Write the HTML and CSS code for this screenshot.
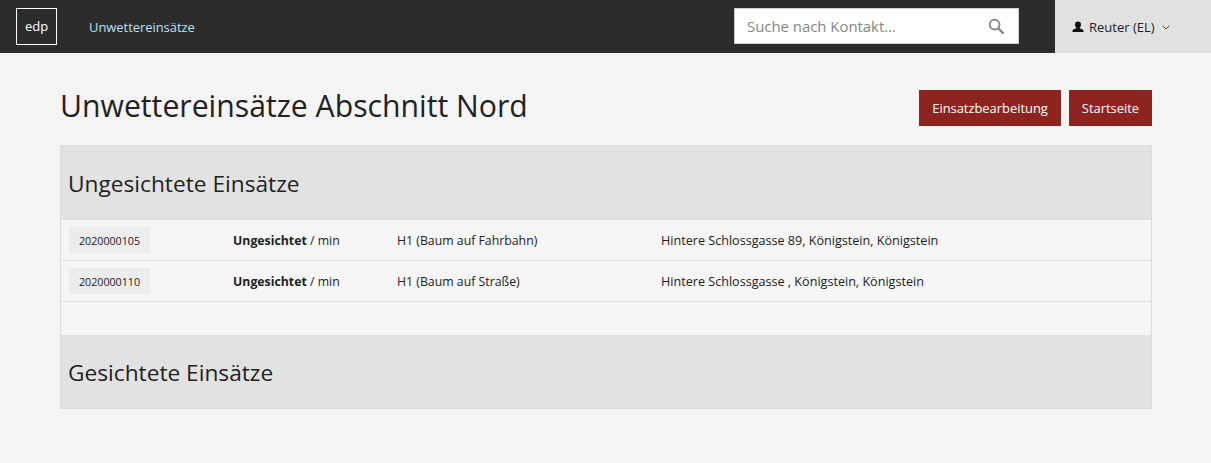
FILE: index.html
```html
<!DOCTYPE html>
<html lang="de">
<head>
  <meta charset="UTF-8" />
  <title>Unwettereinsätze</title>
  <link rel="stylesheet" href="styles.css">
</head>
<body>

<header class="topbar">
  <div class="logo">edp</div>
  <a class="nav-link" href="#">Unwettereinsätze</a>
  <div class="search-box">
    <span class="search-text">Suche nach Kontakt...</span>
    <svg class="search-icon" viewBox="0 0 18 18" width="17" height="17">
      <circle cx="7" cy="7" r="5.2" fill="none" stroke="#8a8a8a" stroke-width="2"/>
      <path d="M11 11l5.5 5.5" fill="none" stroke="#8a8a8a" stroke-width="2.6"/>
    </svg>
  </div>
  <div class="user-menu">
    <svg viewBox="0 0 12 12" width="12" height="12">
      <path d="M4.2 7.2V6.4C3.4 5.7 3 4.6 3 3.4 3 1.4 4.2.5 6 .5s3 .9 3 2.9c0 1.2-.4 2.3-1.2 3v.8c1.6.6 3.7 1.200 3.700 2.600V11H.5V9.800C.5 8.400 2.600 7.800 4.200 7.200z" fill="#111"/>
    </svg>
    <span class="user-name">Reuter (EL)</span>
    <svg viewBox="0 0 8 5" width="8" height="5">
      <path d="M.7.8L4 4l3.300-3.200" fill="none" stroke="#444" stroke-width="1"/>
    </svg>
  </div>
</header>

<main class="content">
  <div class="page-head">
    <h1>Unwettereinsätze Abschnitt Nord</h1>
    <div class="actions">
      <a class="btn" href="#">Einsatzbearbeitung</a>
      <a class="btn" href="#">Startseite</a>
    </div>
  </div>

  <section class="panel">
    <h2 class="panel-title">Ungesichtete Einsätze</h2>
    <div class="row">
      <div class="col-id"><span class="id-tag">2020000105</span></div>
      <div class="col-state"><b>Ungesichtet</b> / min</div>
      <div class="col-type">H1 (Baum auf Fahrbahn)</div>
      <div class="col-addr">Hintere Schlossgasse 89, Königstein, Königstein</div>
    </div>
    <div class="row row-last">
      <div class="col-id"><span class="id-tag">2020000110</span></div>
      <div class="col-state"><b>Ungesichtet</b> / min</div>
      <div class="col-type">H1 (Baum auf Straße)</div>
      <div class="col-addr">Hintere Schlossgasse , Königstein, Königstein</div>
    </div>
    <div class="spacer"></div>
    <h2 class="panel-title">Gesichtete Einsätze</h2>
  </section>
</main>

</body>
</html>
```

FILE: styles.css
```css
body {
  margin: 0;
  background-color: #f4f4f4;
  color: #222;
  font-family: "Open Sans", sans-serif;
  font-size: 12.3px;
}

.topbar {
  display: flex;
  align-items: center;
  height: 53px;
  background-color: #2c2c2c;
}

.logo {
  box-sizing: border-box;
  width: 41px;
  height: 37px;
  margin-left: 16px;
  border: 1px solid #fff;
  color: #fff;
  font-size: 13px;
  line-height: 35px;
  text-align: center;
}

.nav-link {
  margin-left: 32px;
  color: #bfe0fa;
  font-size: 12.9px;
  text-decoration: none;
}

.search-box {
  box-sizing: border-box;
  display: flex;
  align-items: center;
  justify-content: space-between;
  width: 285px;
  height: 36px;
  margin: 0 0 1px auto;
  padding: 0 13px 0 12px;
  background-color: #fff;
  border: 1px solid #ccc;
}

.search-text {
  color: #858585;
  font-size: 14.9px;
}

.user-menu {
  display: flex;
  align-items: center;
  box-sizing: border-box;
  width: 156px;
  height: 53px;
  margin-left: 36px;
  padding: 1px 0 0 17px;
  background-color: #e1e1e1;
  color: #222;
  font-size: 13px;
}

.user-name {
  margin: 0 7px 0 5px;
}

.content {
  padding: 0 59px 0 60px;
}

.page-head {
  display: flex;
  justify-content: space-between;
  box-sizing: border-box;
  height: 92px;
  padding-top: 37px;
}

h1 {
  margin: -4px 0 0;
  font-size: 30.2px;
  font-weight: 400;
  line-height: 40px;
}

.actions {
  display: flex;
  align-items: flex-start;
  gap: 8px;
}

.btn {
  padding: 0 13px;
  background-color: #8e2420;
  color: #fff;
  font-size: 12.9px;
  line-height: 36px;
  text-decoration: none;
}

.panel {
  border: 1px solid #dcdcdc;
  background-color: #f5f5f5;
}

.panel-title {
  margin: 0;
  height: 73px;
  padding-left: 7px;
  background-color: #e2e2e2;
  font-size: 22.7px;
  font-weight: 400;
  line-height: 76px;
}

.row {
  display: flex;
  align-items: center;
  height: 40px;
  border-top: 1px solid #e0e0e0;
}

.row-last {
  border-bottom: 1px solid #e0e0e0;
}

.col-id {
  width: 172px;
  padding-left: 8px;
  box-sizing: border-box;
}

.id-tag {
  display: block;
  width: 81px;
  height: 26px;
  background-color: #ececec;
  font-size: 10.7px;
  line-height: 28px;
  text-align: center;
}

.col-state {
  width: 164px;
}

.col-type {
  width: 264px;
}

.col-addr {
  font-size: 12.6px;
}

.spacer {
  height: 33px;
}
```
